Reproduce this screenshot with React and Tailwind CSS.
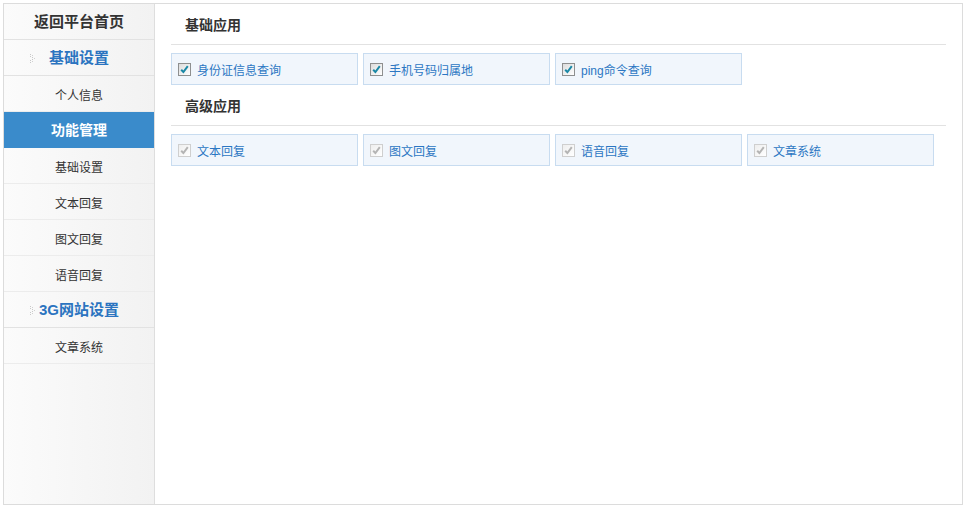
import React from 'react';

const font = { fontFamily: '"Liberation Sans", "Noto Sans CJK SC", sans-serif' };

const menu = [
  { label: '返回平台首页', type: 'top' },
  { label: '基础设置', type: 'group' },
  { label: '个人信息' },
  { label: '功能管理', active: true },
  { label: '基础设置' },
  { label: '文本回复' },
  { label: '图文回复' },
  { label: '语音回复' },
  { label: '3G网站设置', type: 'group' },
  { label: '文章系统' },
];

const sections = [
  { title: '基础应用', items: ['身份证信息查询', '手机号码归属地', 'ping命令查询'], enabled: true },
  { title: '高级应用', items: ['文本回复', '图文回复', '语音回复', '文章系统'], enabled: false },
];

const Dots = () => (
  <svg width="5" height="9" viewBox="0 0 5 9" className="absolute left-[26px] top-[14px]">
    <rect x="0" y="0" width="1" height="1" fill="#c8c8c8" />
    <rect x="2" y="1" width="1" height="1" fill="#d0d0d0" />
    <rect x="0" y="2" width="1" height="1" fill="#c8c8c8" />
    <rect x="2" y="3" width="1" height="1" fill="#c8c8c8" />
    <rect x="4" y="4" width="1" height="1" fill="#d0d0d0" />
    <rect x="2" y="5" width="1" height="1" fill="#c8c8c8" />
    <rect x="0" y="6" width="1" height="1" fill="#c8c8c8" />
    <rect x="2" y="7" width="1" height="1" fill="#d0d0d0" />
    <rect x="0" y="8" width="1" height="1" fill="#c8c8c8" />
  </svg>
);

const Check = ({ enabled }) => (
  <span
    className={`w-[13px] h-[13px] shrink-0 flex items-center justify-center border ${
      enabled ? 'border-[#8e8f8f] bg-gradient-to-br from-[#dcdcdc] to-white' : 'border-[#cfcfcf] bg-gradient-to-br from-[#eeeeee] to-white'
    }`}
  >
    <svg width="9" height="9" viewBox="0 0 9 9">
      <path
        d="M1.2 4.8 L3.4 7 L7.8 1.2"
        fill="none"
        stroke={enabled ? '#1a88a6' : '#b4b4b4'}
        strokeWidth="2"
      />
    </svg>
  </span>
);

export default function App() {
  return (
    <div className="p-[3px] bg-white" style={font}>
      <div className="w-[960px] h-[502px] border border-[#dcdcdc] flex">
        <aside className="w-[151px] h-full border-r border-[#dedede] bg-gradient-to-r from-[#fbfbfb] to-[#f2f2f2]">
          {menu.map((m, i) => (
            <div
              key={i}
              className={`relative h-9 flex items-center justify-center border-b pt-[2px] ${
                m.active
                  ? 'bg-[#3a8bcb] border-[#3a8bcb] text-white font-bold text-[14px]'
                  : m.type === 'group'
                  ? 'border-[#e2e2e2] text-[#2b74c0] font-bold text-[15px]'
                  : m.type === 'top'
                  ? 'border-[#e2e2e2] text-[#333] font-bold text-[15px]'
                  : 'border-[#ececec] text-[#333] text-[12px] pt-[4px]'
              }`}
            >
              {m.type === 'group' && <Dots />}
              {m.label}
            </div>
          ))}
        </aside>

        <main className="flex-1 px-4">
          {sections.map((s) => (
            <div key={s.title}>
              <div className="h-[41px] border-b border-[#e2e2e2] flex items-center pl-[14px] pt-[2px] text-[14px] font-bold text-[#333]">
                {s.title}
              </div>
              <div className="mt-2 flex gap-[5px]">
                {s.items.map((it) => (
                  <div
                    key={it}
                    className="w-[187px] h-8 border border-[#c8dcf0] bg-[#f1f6fc] flex items-center pl-[6px] gap-[6px]"
                  >
                    <Check enabled={s.enabled} />
                    <span className="text-[12px] text-[#2c77c3] pt-[3px]">{it}</span>
                  </div>
                ))}
              </div>
            </div>
          ))}
        </main>
      </div>
    </div>
  );
}
